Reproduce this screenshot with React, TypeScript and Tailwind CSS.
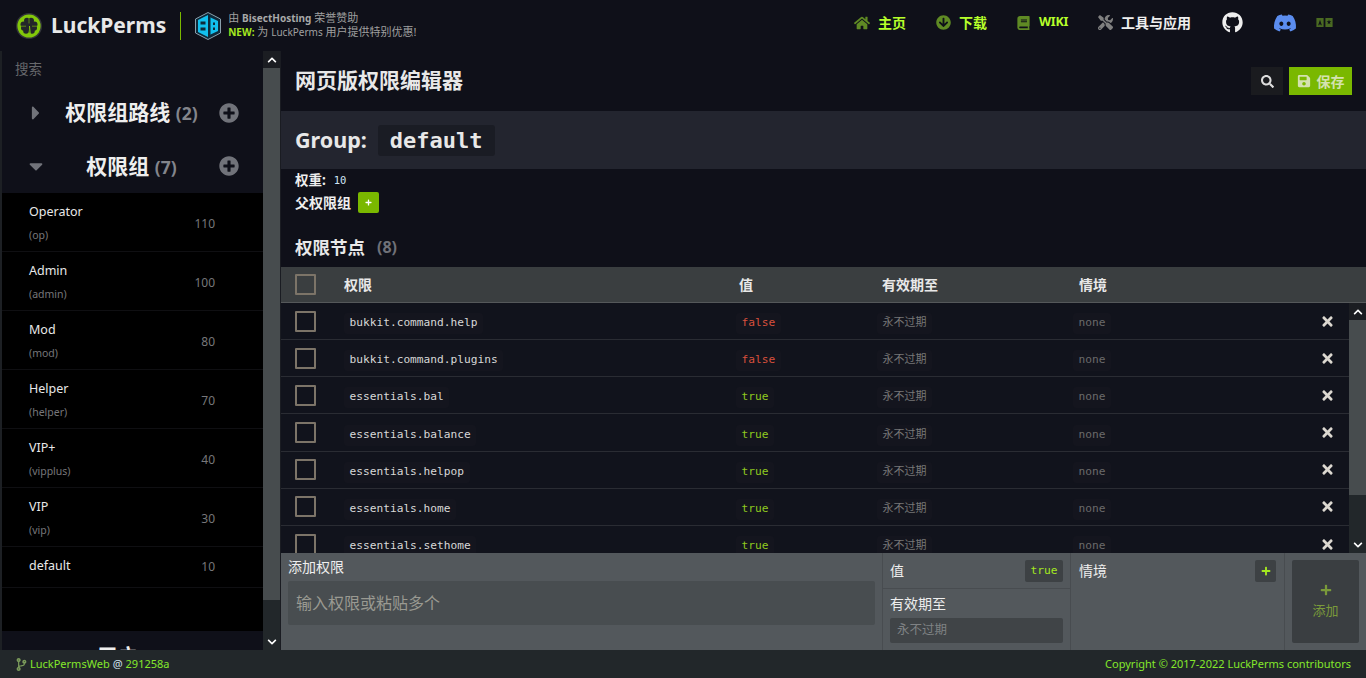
import React from "react";
import {
  FaHome,
  FaArrowCircleDown,
  FaBook,
  FaTools,
  FaGithub,
  FaDiscord,
  FaSave,
  FaSearch,
  FaPlus,
  FaTimes,
  FaPlusCircle,
  FaCaretRight,
  FaCaretDown,
  FaCodeBranch,
  FaChevronUp,
  FaChevronDown,
} from "react-icons/fa";

const groups = [
  { name: "Operator", id: "op", weight: 110 },
  { name: "Admin", id: "admin", weight: 100 },
  { name: "Mod", id: "mod", weight: 80 },
  { name: "Helper", id: "helper", weight: 70 },
  { name: "VIP+", id: "vipplus", weight: 40 },
  { name: "VIP", id: "vip", weight: 30 },
];

const nodes = [
  { key: "bukkit.command.help", value: false },
  { key: "bukkit.command.plugins", value: false },
  { key: "essentials.bal", value: true },
  { key: "essentials.balance", value: true },
  { key: "essentials.helpop", value: true },
  { key: "essentials.home", value: true },
  { key: "essentials.sethome", value: true },
];

const mono = "[font-family:'DejaVu_Sans_Mono','Noto_Sans_CJK_SC',monospace]";

const CloverLogo = () => (
  <svg viewBox="0 0 26 26" className="w-[26px] h-[26px] shrink-0">
    <circle cx="13" cy="13" r="13" fill="#33363a" />
    <circle cx="13" cy="13" r="11.6" fill="#82c80a" />
    {/* leaves */}
    <g fill="#23262a">
      <circle cx="11" cy="7.800" r="3" />
      <circle cx="15" cy="7.800" r="3" />
      <circle cx="7.500" cy="11.500" r="3" />
      <circle cx="7.800" cy="15" r="2.800" />
      <circle cx="18.500" cy="11.500" r="3" />
      <circle cx="18.200" cy="15" r="2.800" />
      <circle cx="10" cy="18" r="2.800" />
      <circle cx="16" cy="18" r="2.800" />
      <circle cx="13" cy="13" r="4.500" />
    </g>
    <path d="M4 13.200h6M16 13.200h6M13 3.500v7" stroke="#82c80a" strokeWidth="0.6" />
    <path d="M13 13l.6 8.500h1.200L14 13z" fill="#82c80a" />
  </svg>
);

const BisectLogo = () => (
  <svg viewBox="0 0 26 28" className="w-[26px] h-[28px] shrink-0">
    <path d="M13 .5L25.500 7v14L13 27.500.5 21V7z" fill="#0e2a3a" stroke="#8aa0ac" strokeWidth="1" />
    <path d="M13 3L3 8v12l10 5z" fill="#12c0ee" />
    <path d="M14.500 5l8.500 4v10l-8.500 4z" fill="#12c0ee" />
    <path d="M5.500 9.500h5v3h-5zM5.500 15.500h5v3h-5z" fill="#0e2a3a" />
    <path d="M13 4h2.500v20H13zM18 10.500h2v2.500h-2zM18 15.500h2v2.500h-2z" fill="#0e2a3a" />
  </svg>
);

const TranslateIcon = () => (
  <svg viewBox="0 0 18 10" className="w-[17px] h-[9px] shrink-0">
    <path
      fillRule="evenodd"
      d="M0 0h8v10H0zM4 2L2 8h1.200l.3-1h1l.3 1H6zM10 0h8v10h-8zM14 1.800l-.6 1.900h-2l1.600 1.200-.6 2 1.600-1.200 1.600 1.200-.6-2 1.600-1.200h-2z"
      fill="#4a6a22"
    />
  </svg>
);

const NavItem = ({
  icon,
  label,
  light,
  small,
}: {
  icon: React.ReactNode;
  label: string;
  light?: boolean;
  small?: boolean;
}) => (
  <div className="flex items-center gap-2">
    {icon}
    <span
      className={`font-bold ${small ? "text-[12.500px] tracking-[-0.3px]" : "text-[14px]"} ${
        light ? "text-[#eeeeee]" : "text-[#b6ff2a]"
      }`}
    >
      {label}
    </span>
  </div>
);

const Scrollbar = ({ thumb }: { thumb: number }) => (
  <div className="w-[17px] shrink-0 flex flex-col bg-[#22272a]">
    <div className="h-[17px] bg-[#1b1d22] flex items-center justify-center">
      <FaChevronUp className="text-white w-[10px] h-[10px]" />
    </div>
    <div className="bg-[#474c4e]" style={{ height: thumb }} />
    <div className="flex-1" />
    <div className="h-[17px] flex items-center justify-center">
      <FaChevronDown className="text-white w-[10px] h-[10px]" />
    </div>
  </div>
);

const SectionHead = ({
  title,
  count,
  open,
}: {
  title: string;
  count: number;
  open?: boolean;
}) => (
  <div className="h-[53.500px] shrink-0 flex items-center pl-[26px] pr-[24px]">
    <div className="w-[16px] flex justify-center text-[#71737a]">
      {open ? <FaCaretDown className="w-[22px] h-[22px] shrink-0" /> : <FaCaretRight className="w-[22px] h-[22px] shrink-0" />}
    </div>
    <div className="flex-1 text-center text-[21px] font-bold text-[#eeeeee] leading-none">
      {title} <span className="text-[#83858c] text-[17.500px]">({count})</span>
    </div>
    <FaPlusCircle className="w-[20px] h-[20px] text-[#71737a]" />
  </div>
);

const GroupRow = ({
  name,
  id,
  weight,
}: {
  name: string;
  id?: string;
  weight: number;
}) => (
  <div className={`flex items-center border-b border-[#0f0f12] pl-[27px] pr-[48px] ${id ? "h-[59px] pt-[3px]" : "h-[41px]"}`}>
    <div className="flex-1">
      <div className={`text-[12.500px] text-[#e8e8e8] leading-[18px] ${id ? "" : "-mt-[3px]"}`}>{name}</div>
      {id && <div className="text-[10.500px] text-[#77777a] leading-[18px] mt-[5px]">({id})</div>}
    </div>
    <div className="text-[12px] text-[#77777a]">{weight}</div>
  </div>
);

const Chip = ({ className, children }: { className: string; children: React.ReactNode }) => (
  <span className={`${mono} text-[11.200px] leading-[20px] h-[21px] px-[5.500px] rounded-[3px] bg-[#14151e] inline-block ${className}`}>
    {children}
  </span>
);

const Check = () => <div className="w-[21px] h-[21px] border-2 border-[#7c7468] rounded-[1px] shrink-0" />;

const App = () => {
  return (
    <div className="h-screen w-full overflow-hidden flex flex-col bg-[#0f1019] text-white [font-family:'Noto_Sans','Noto_Sans_CJK_SC',sans-serif]">
      <header className="h-[51px] shrink-0 flex items-center pl-[16px] pr-[33px]">
        <CloverLogo />
        <span className="ml-[9px] text-[21px] font-bold text-[#e8e8e8] leading-none">LuckPerms</span>
        <div className="ml-[14px] w-px h-[28px] bg-[#7ab800]" />
        <div className="ml-[14px]">
          <BisectLogo />
        </div>
        <div className="ml-[7px] text-[11px] leading-[14px] text-[#a0a0a0] -mt-px">
          <div>
            由 <b className="text-[#a8a8a8] text-[10px]">BisectHosting</b> 荣誉赞助
          </div>
          <div>
            <b className="text-[#a5e81f] text-[10px]">NEW:</b> 为 <span className="text-[10px]">LuckPerms</span> 用户提供特别优惠!
          </div>
        </div>
        <nav className="ml-auto flex items-center gap-[30px] -mt-[6px]">
          <NavItem icon={<FaHome className="w-[16px] h-[16px] text-[#5f8a24]" />} label="主页" />
          <NavItem icon={<FaArrowCircleDown className="w-[15px] h-[15px] text-[#5f8a24]" />} label="下载" />
          <NavItem icon={<FaBook className="w-[13px] h-[14px] text-[#5f8a24] mr-[1px]" />} label="WIKI" small />
          <NavItem icon={<FaTools className="w-[15px] h-[15px] text-[#808080]" />} label="工具与应用" light />
          <FaGithub className="w-[21px] h-[21px] text-[#eeeeee] ml-[1px]" />
          <FaDiscord className="w-[24px] h-[24px] text-[#5b8def]" />
          <div className="-ml-[11px]">
            <TranslateIcon />
          </div>
        </nav>
      </header>

      <div className="flex-1 min-h-0 flex">
        <aside className="w-[280px] shrink-0 flex">
          <div className="w-[2px] bg-[#1d2024] shrink-0" />
          <div className="flex-1 min-w-0 flex flex-col overflow-hidden">
            <div className="h-[35px] shrink-0 pl-[13px] pt-[8px] text-[13.500px] text-[#67686c]">搜索</div>
            <SectionHead title="权限组路线" count={2} />
            <SectionHead title="权限组" count={7} open />
            <div className="h-[438px] shrink-0 bg-black">
              {groups.map((g) => (
                <GroupRow key={g.id} {...g} />
              ))}
              <GroupRow name="default" weight={10} />
            </div>
            <div className="h-[19px] shrink-0 overflow-hidden pt-[15px] text-center pr-[30px] text-[21px] font-bold text-[#eeeeee] leading-none">
              用户
            </div>
          </div>
          <Scrollbar thumb={532} />
        </aside>

        <main className="flex-1 min-w-0 flex flex-col border-l border-[#1a1c22]">
          <div className="h-[60px] shrink-0 flex items-center pl-[14px] pr-[14px]">
            <h1 className="text-[21px] font-bold text-[#e8e8e8]">网页版权限编辑器</h1>
            <button className="ml-auto w-[32px] h-[28px] bg-[#1a1b1f] flex items-center justify-center">
              <FaSearch className="w-[13px] h-[13px] text-[#dddddd]" />
            </button>
            <button className="ml-[6px] w-[63px] h-[28px] bg-[#7ab800] flex items-center justify-center gap-[6px] text-[14px] font-bold text-[#d4e2b0]">
              <FaSave className="w-[14px] h-[14px]" />
              保存
            </button>
          </div>

          <div className="h-[58px] shrink-0 bg-[#23252f] flex items-center pl-[14px]">
            <span className="text-[21.500px] font-bold text-[#e8e8e8]">Group:</span>
            <span className={`${mono} ml-[11px] h-[31px] leading-[31px] px-[12px] rounded-[3px] bg-[#1a1c24] text-[22px] font-bold text-[#e8e8e8]`}>
              default
            </span>
          </div>

          <div className="pl-[14px] h-[44px] shrink-0 pt-[1px]">
            <div className="flex items-center h-[21px]">
              <span className="text-[13.500px] font-bold text-[#eeeeee]">权重:</span>
              <span className={`${mono} ml-[8px] text-[10.500px] text-[#cfe6f5]`}>10</span>
            </div>
            <div className="flex items-center h-[23px]">
              <span className="text-[14px] font-bold text-[#eeeeee]">父权限组</span>
              <button className="ml-[7px] w-[21px] h-[21px] rounded-[2px] bg-[#7ab800] flex items-center justify-center">
                <FaPlus className="w-[7px] h-[7px] text-white" />
              </button>
            </div>
          </div>

          <div className="h-[54px] shrink-0 pl-[14px] pt-[14px] flex items-center">
            <span className="text-[17.500px] font-bold text-[#e8e8e8]">权限节点</span>
            <span className="ml-[12px] text-[16px] font-bold text-[#6f7178]">(8)</span>
          </div>

          <div className="h-[36px] shrink-0 bg-[#3a3e40] border-b border-[#55585a] flex items-center pl-[14px] text-[14px] font-bold text-[#e8e8e8]">
            <Check />
            <span className="ml-[28px] w-[395px]">权限</span>
            <span className="w-[143px]">值</span>
            <span className="w-[197px]">有效期至</span>
            <span>情境</span>
          </div>

          <div className="h-[250px] shrink-0 flex">
            <div className="flex-1 min-w-0 overflow-hidden bg-[#11131c]">
              {nodes.map((n) => (
                <div key={n.key} className="h-[37.170px] flex items-center pl-[14px] border-b border-[#2a2c33]">
                  <Check />
                  <div className="ml-[28px] w-[392px]">
                    <Chip className="text-[#d8d8d8]">{n.key}</Chip>
                  </div>
                  <div className="w-[146px]">
                    <Chip className={n.value ? "text-[#8fc91e]" : "text-[#d9503c]"}>{n.value ? "true" : "false"}</Chip>
                  </div>
                  <div className="w-[196px] -ml-[5px]">
                    <Chip className="text-[#777777] text-[11px]">永不过期</Chip>
                  </div>
                  <div className="flex-1">
                    <Chip className="text-[#6b6b6b]">none</Chip>
                  </div>
                  <FaTimes className="w-[15px] h-[15px] text-[#dcd8d0] mr-[14px]" />
                </div>
              ))}
            </div>
            <Scrollbar thumb={175} />
          </div>

          <div className="flex-1 min-h-0 bg-[#53585c] flex text-[14px] text-[#eeeeee]">
            <div className="w-[602px] shrink-0 pl-[7px] pr-[7px] border-r border-[#484c50]">
              <div className="h-[28px] pb-[2px] flex items-center">添加权限</div>
              <div className="h-[44px] bg-[#484d50] rounded-[2px] flex items-center px-[8px] text-[16px] text-[#9a9a92]">
                输入权限或粘贴多个
              </div>
            </div>
            <div className="w-[188px] shrink-0 border-r border-[#484c50] flex flex-col">
              <div className="h-[36px] shrink-0 border-b border-[#484c50] flex items-center justify-between px-[7px]">
                <span>值</span>
                <span className={`${mono} w-[38px] h-[22px] leading-[22px] text-center rounded-[2px] bg-[#3d4144] text-[11.200px] text-[#a5e81f]`}>
                  true
                </span>
              </div>
              <div className="px-[7px]">
                <div className="h-[29px] flex items-center">有效期至</div>
                <div className="h-[25px] rounded-[2px] bg-[#404447] flex items-center px-[7px] text-[12.500px] text-[#7f8284]">
                  永不过期
                </div>
              </div>
            </div>
            <div className="w-[214px] shrink-0 border-r border-[#484c50] px-[8px]">
              <div className="h-[36px] flex items-center justify-between">
                <span className="-mt-[1px]">情境</span>
                <div className="w-[21px] h-[22px] rounded-[2px] bg-[#3d4144] flex items-center justify-center">
                  <FaPlus className="w-[10px] h-[10px] text-[#a5e81f]" />
                </div>
              </div>
            </div>
            <div className="flex-1 py-[7px] px-[7px]">
              <div className="h-[83px] pt-[2px] rounded-[2px] bg-[#3a3e41] flex flex-col items-center justify-center text-[13px] text-[#7a9a3a]">
                <FaPlus className="w-[12px] h-[12px] text-[#7a9a3a] mb-[5px]" />
                添加
              </div>
            </div>
          </div>
        </main>
      </div>

      <footer className="h-[28px] shrink-0 bg-[#22272a] flex items-center justify-between pl-[16px] pr-[15px] text-[11px] text-[#84e82a]">
        <div className="flex items-center">
          <FaCodeBranch className="w-[11px] h-[13px] text-[#7a9a5a] mr-[3px]" />
          LuckPermsWeb <span className="text-[#cfe0ea] mx-[3px]">@</span> 291258a
        </div>
        <div>Copyright © 2017-2022 LuckPerms contributors</div>
      </footer>
    </div>
  );
};

export default App;
